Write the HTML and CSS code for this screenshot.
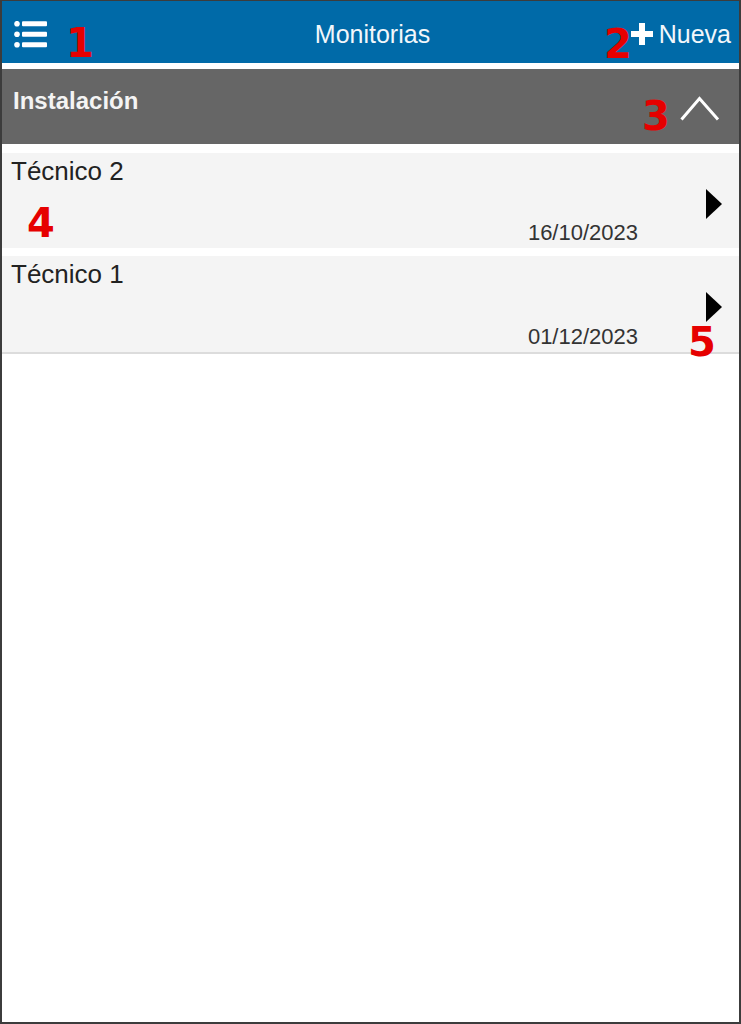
FILE: index.html
```html
<!DOCTYPE html>
<html lang="es">
<head>
<meta charset="utf-8">
<title>Monitorias</title>
<link rel="stylesheet" href="styles.css">
</head>
<body>
<div class="frame">
  <header class="topbar">
    <div class="topbar-left">
      <svg class="icon-list" width="33" height="27" viewBox="0 0 33 27">
        <circle cx="3" cy="2.7" r="2.8" fill="#fff"/>
        <circle cx="3" cy="13.2" r="2.8" fill="#fff"/>
        <circle cx="3" cy="23.7" r="2.8" fill="#fff"/>
        <rect x="8" y="0.2" width="25" height="5" rx="1" fill="#fff"/>
        <rect x="8" y="10.7" width="25" height="5" rx="1" fill="#fff"/>
        <rect x="8" y="21.2" width="25" height="5" rx="1" fill="#fff"/>
      </svg>
    </div>
    <div class="topbar-title">Monitorias</div>
    <div class="topbar-right">
      <svg class="icon-plus" width="22" height="22" viewBox="0 0 22 22">
        <rect x="8" y="0" width="6" height="22" fill="#fff"/>
        <rect x="0" y="8" width="22" height="6" fill="#fff"/>
      </svg>
      <span class="nueva">Nueva</span>
    </div>
  </header>

  <section class="group">
    <div class="group-header">
      <span class="group-title">Instalación</span>
      <svg class="icon-chevron" width="40" height="26" viewBox="0 0 40 26">
        <polyline points="1.5,23.5 19.5,2.5 38,23.5" fill="none" stroke="#fff" stroke-width="3"/>
      </svg>
    </div>
    <ul class="items">
      <li class="item">
        <div class="item-main">
          <span class="item-title">Técnico 2</span>
          <span class="item-date">16/10/2023</span>
        </div>
        <div class="item-arrow">
          <svg width="16" height="30" viewBox="0 0 16 30"><polygon points="0,0 16,15 0,30" fill="#000"/></svg>
        </div>
      </li>
      <li class="item">
        <div class="item-main">
          <span class="item-title">Técnico 1</span>
          <span class="item-date">01/12/2023</span>
        </div>
        <div class="item-arrow">
          <svg width="16" height="30" viewBox="0 0 16 30"><polygon points="0,0 16,15 0,30" fill="#000"/></svg>
        </div>
      </li>
    </ul>
  </section>

  <span class="marker m1">1</span>
  <span class="marker m2">2</span>
  <span class="marker m3">3</span>
  <span class="marker m4">4</span>
  <span class="marker m5">5</span>
</div>
</body>
</html>
```

FILE: styles.css
```css
* { box-sizing: border-box; }

html, body {
  margin: 0;
  padding: 0;
  background: #fff;
}

.frame {
  position: relative;
  width: 741px;
  height: 1024px;
  border: 2px solid #3c3c3c;
  border-top-width: 1px;
  background: #fff;
  font-family: "Liberation Sans", Arial, sans-serif;
  overflow: hidden;
}

.topbar {
  height: 62px;
  background: #006aa8;
  color: #fff;
  display: grid;
  grid-template-columns: 1fr auto 1fr;
  align-items: center;
  padding: 3px 8px 0 12px;
}

.topbar-left {
  display: flex;
  align-items: center;
}

.icon-list { display: block; margin-top: 1px; }

.topbar-title {
  font-size: 25px;
  line-height: 30px;
  color: #f2f7fb;
}

.topbar-right {
  display: flex;
  align-items: center;
  justify-content: flex-end;
  gap: 6px;
}

.icon-plus { display: block; margin-top: 1px; }

.nueva {
  font-size: 25px;
  line-height: 30px;
  color: #f2f7fb;
}

.group {
  margin-top: 6px;
}

.group-header {
  height: 75px;
  background: #666666;
  display: flex;
  justify-content: space-between;
  align-items: flex-start;
  padding: 18px 19px 0 11px;
}

.group-title {
  font-size: 24px;
  line-height: 28px;
  font-weight: bold;
  color: #f4f4f4;
}

.icon-chevron {
  display: block;
  margin-top: 9px;
}

.items {
  list-style: none;
  margin: 9px 0 0;
  padding: 0;
  display: flex;
  flex-direction: column;
  gap: 8px;
}

.item {
  height: 95px;
  background: #f4f4f4;
  display: flex;
}

.item:last-child {
  height: 98px;
  border-bottom: 2px solid #dcdcdc;
}

.item-main {
  flex: 1;
  display: flex;
  flex-direction: column;
  justify-content: space-between;
  padding: 3px 0 3px 9px;
}

.item-title {
  font-size: 26px;
  line-height: 30px;
  color: #222;
}

.item-date {
  align-self: flex-end;
  font-size: 22px;
  line-height: 25px;
  color: #333;
}

.item-arrow {
  width: 101px;
  display: flex;
  align-items: center;
  justify-content: flex-end;
  padding: 6px 17px 0 0;
}

.item-arrow svg { display: block; }

.marker {
  position: absolute;
  font-family: "DejaVu Sans", sans-serif;
  font-weight: bold;
  font-size: 40px;
  line-height: 1;
  color: #e60000;
}

.m1 { left: 64px; top: 22px; }
.m2 { left: 602px; top: 23px; }
.m3 { left: 640px; top: 95px; }
.m4 { left: 25px; top: 202px; }
.m5 { left: 686px; top: 321px; }
```
